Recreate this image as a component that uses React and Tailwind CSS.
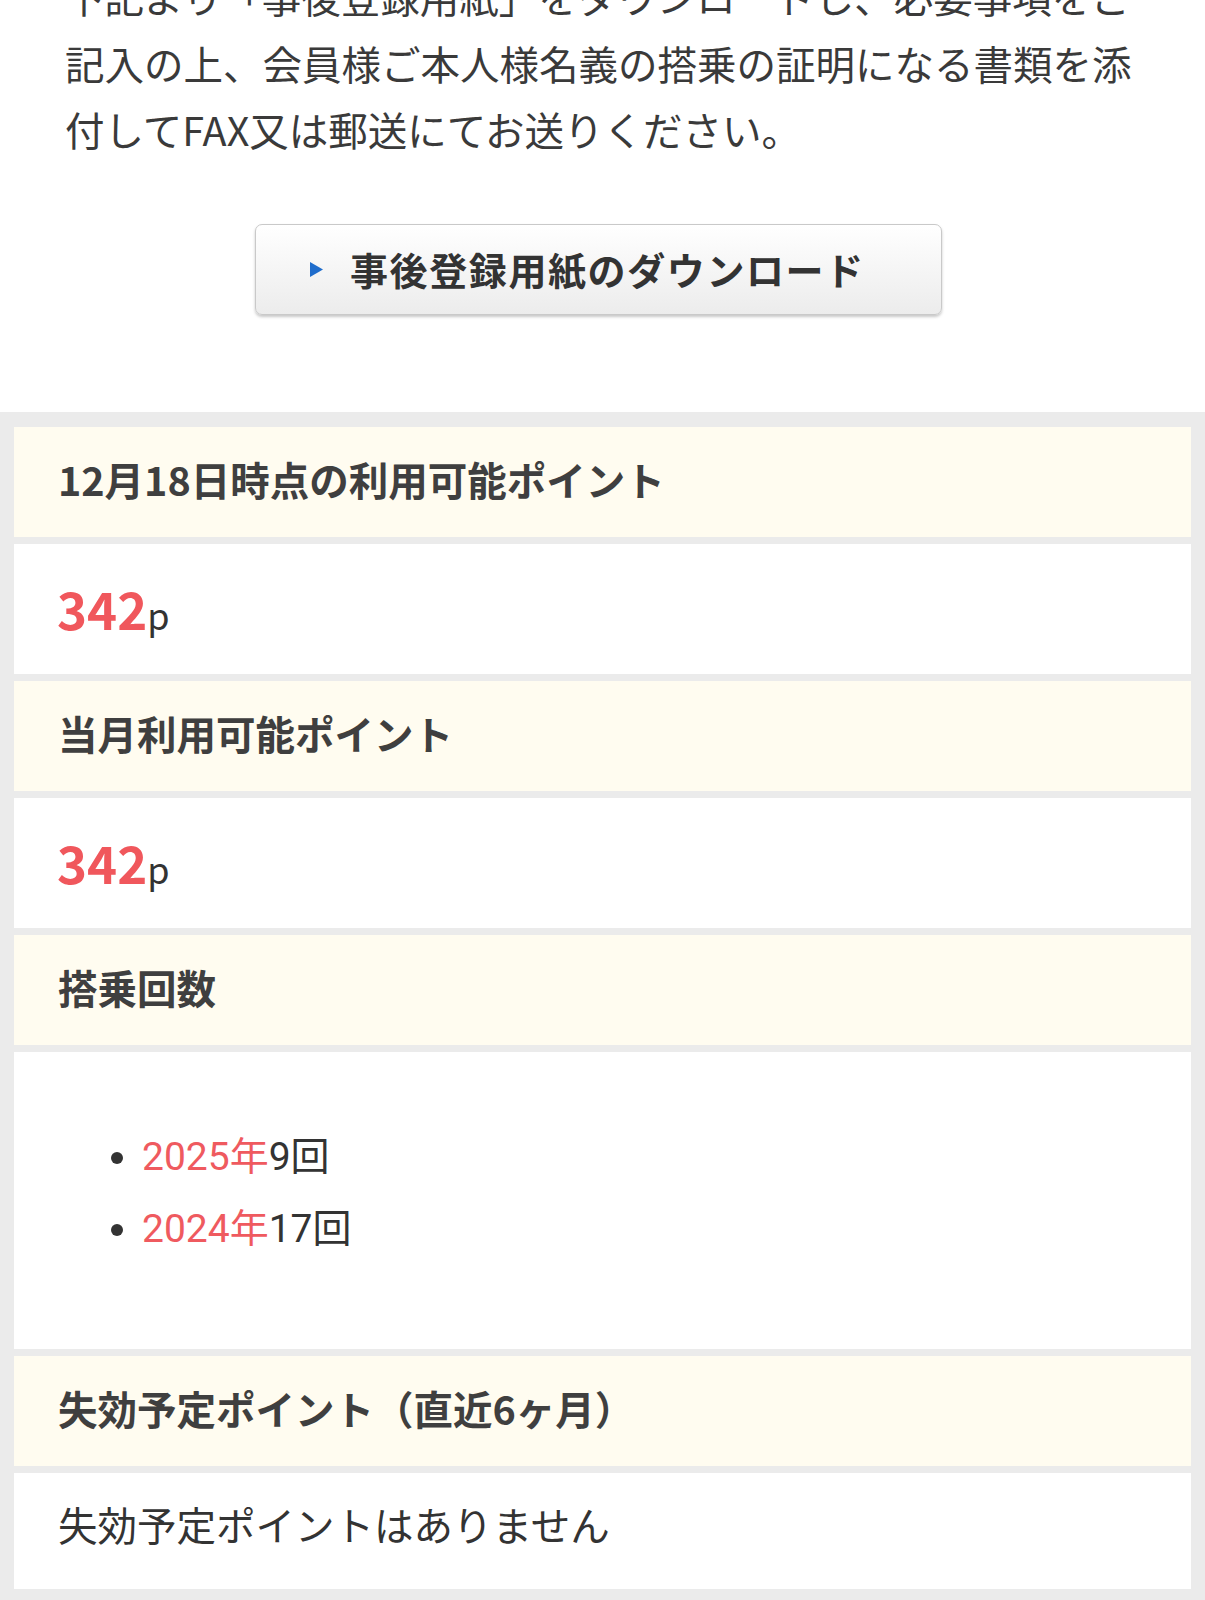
import React from "react";

const jp = "font-['Noto_Sans_CJK_JP',sans-serif]";

function Header({ children }) {
  return (
    <div className="h-[110px] bg-[#fffcf0] flex items-center pl-[44px] pb-[6px]">
      <h3 className={`${jp} text-[39.5px] font-bold text-[#3f3f3f] leading-none`}>{children}</h3>
    </div>
  );
}

function Points({ value }) {
  return (
    <div className="h-[130px] bg-white flex items-center pl-[43px]">
      <p className={`${jp} leading-none`}>
        <span className="text-[51px] font-bold text-[#f0575c]">{value}</span>
        <span className="text-[36px] text-[#333]">p</span>
      </p>
    </div>
  );
}

function App() {
  const years = [
    { year: "2025年", count: "9回" },
    { year: "2024年", count: "17回" },
  ];

  return (
    <div className="w-[1205px] h-[1600px] overflow-hidden bg-white">
      <p className={`${jp} -mt-[37px] pl-[65px] w-[1145px] text-[39.5px] leading-[66.5px] text-[#3a3a3a]`}>
        下記より「事後登録用紙」をダウンロードし、必要事項をご記入の上、会員様ご本人様名義の搭乗の証明になる書類を添付してFAX又は郵送にてお送りください。
      </p>

      <button
        className="mt-[61px] ml-[255px] w-[687px] h-[91px] flex items-center pl-[54px] rounded-[7px] border border-[#c9c9c9] bg-gradient-to-b from-white to-[#ececec] shadow-[0_2px_3px_rgba(0,0,0,0.22)]"
      >
        <svg width="13" height="15" viewBox="0 0 13 15">
          <polygon points="0,0 13,7.5 0,15" fill="#1f6dcc" />
        </svg>
        <span className={`${jp} ml-[27px] text-[38px] font-bold text-[#333] tracking-[1.6px] leading-none`}>
          事後登録用紙のダウンロード
        </span>
      </button>

      <div className="mt-[97px] bg-[#ebebeb] px-[14px] pt-[15px] pb-[11px] flex flex-col gap-[7px]">
        <Header>12月18日時点の利用可能ポイント</Header>
        <Points value="342" />
        <Header>当月利用可能ポイント</Header>
        <Points value="342" />
        <Header>搭乗回数</Header>
        <div className="h-[297px] bg-white pt-[70px]">
          <ul className="flex flex-col">
            {years.map((y) => (
              <li key={y.year} className="h-[72px] flex items-center pl-[97px]">
                <span className="w-[12px] h-[12px] rounded-full bg-[#333] mr-[19px]" />
                <span className="font-['Roboto','Noto_Sans_CJK_JP',sans-serif] text-[39px] leading-none">
                  <span className="text-[#ef5a5f]">{y.year}</span>
                  <span className="text-[#333]">{y.count}</span>
                </span>
              </li>
            ))}
          </ul>
        </div>
        <Header>失効予定ポイント（直近6ヶ月）</Header>
        <div className="h-[116px] bg-white flex items-center pl-[44px] pb-[14px]">
          <p className={`${jp} text-[39.5px] text-[#333] leading-none`}>失効予定ポイントはありません</p>
        </div>
      </div>
    </div>
  );
}

export default App;
